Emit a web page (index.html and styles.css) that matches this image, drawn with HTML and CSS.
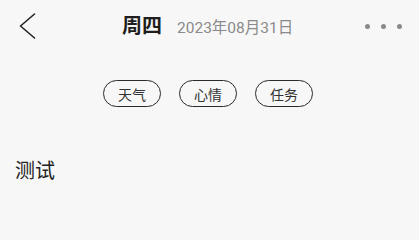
FILE: index.html
```html
<!DOCTYPE html>
<html lang="zh">
<head>
<meta charset="utf-8">
<link rel="stylesheet" href="styles.css">
</head>
<body>
<div class="page">
  <header class="topbar">
    <div class="back">
      <svg width="18" height="26" viewBox="0 0 18 26"><path d="M15.5 1 L1.5 13 L15.5 25" fill="none" stroke="#222" stroke-width="1.6" stroke-linecap="round" stroke-linejoin="round"/></svg>
    </div>
    <div class="title">
      <span class="weekday">周四</span>
      <span class="date">2023年08月31日</span>
    </div>
    <div class="more">
      <span class="dot"></span><span class="dot"></span><span class="dot"></span>
    </div>
  </header>
  <div class="tags">
    <span class="tag">天气</span>
    <span class="tag">心情</span>
    <span class="tag">任务</span>
  </div>
  <div class="content">测试</div>
</div>
</body>
</html>
```
FILE: styles.css
```css
html, body {
  margin: 0;
  padding: 0;
  background: #f7f7f7;
}
.page {
  width: 419px;
  height: 202px;
  overflow: hidden;
  font-family: "Noto Sans CJK SC", "Noto Sans", sans-serif;
  color: #222;
}
.topbar {
  height: 52px;
  display: flex;
  align-items: center;
  padding: 0 17px 0 19px;
}
.back {
  width: 18px;
  height: 26px;
  display: flex;
}
.title {
  display: flex;
  align-items: baseline;
  gap: 15px;
  margin-left: 85px;
  line-height: 28px;
}
.weekday {
  font-size: 20px;
  font-weight: 700;
  color: #1e1e1e;
}
.date {
  font-family: "Roboto", "Noto Sans CJK SC", sans-serif;
  font-size: 15.5px;
  color: #8a8a8a;
}
.more {
  display: flex;
  gap: 11px;
  margin-left: auto;
}
.dot {
  width: 5px;
  height: 5px;
  border-radius: 50%;
  background: #8a8a8a;
}
.tags {
  display: flex;
  justify-content: center;
  gap: 18px;
  margin-top: 28px;
  padding-right: 3px;
}
.tag {
  box-sizing: border-box;
  width: 58px;
  height: 27px;
  border: 1.4px solid #2a2a2a;
  border-radius: 14px;
  display: flex;
  align-items: center;
  justify-content: center;
  font-size: 14px;
  color: #333;
}
.content {
  margin-top: 49px;
  padding-left: 15px;
  font-size: 20px;
  line-height: 28px;
  color: #222;
}
```
